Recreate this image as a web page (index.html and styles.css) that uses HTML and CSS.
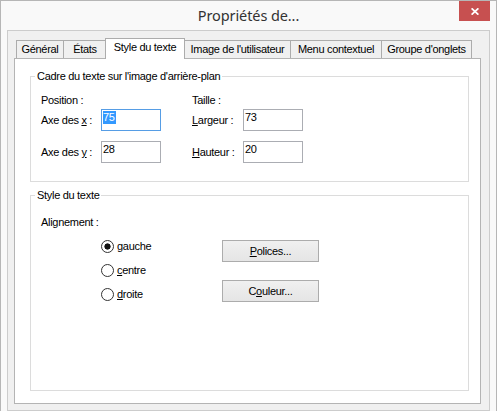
FILE: index.html
```html
<!DOCTYPE html>
<html lang="fr">
<head>
    <meta charset="UTF-8">
    <title>Propriétés de...</title>
    <link rel="stylesheet" href="styles.css">
</head>
<body>
    <div class="window">
        <div class="titlebar">
            <span class="title">Propriétés de...</span>
            <button class="close" aria-label="Fermer">
                <svg width="8" height="7" viewBox="0 0 8 7"><path d="M0.6 0.3 L7.4 6.7 M7.4 0.3 L0.6 6.7" stroke="#fff" stroke-width="1.7" fill="none"/></svg>
            </button>
        </div>

        <div class="frame">
            <div class="tabs">
                <div class="tab tab-general">Général</div>
                <div class="tab tab-states">États</div>
                <div class="tab tab-style active">Style du texte</div>
                <div class="tab tab-image">Image de l'utilisateur</div>
                <div class="tab tab-menu">Menu contextuel</div>
                <div class="tab tab-groups">Groupe d'onglets</div>
            </div>

            <div class="panel">
                <fieldset class="group group-frame">
                    <legend>Cadre du texte sur l'image d'arrière-plan</legend>
                    <div class="coords">
                        <span class="head">Position :</span>
                        <span></span>
                        <span class="head">Taille :</span>
                        <span></span>

                        <label class="row-label">Axe des <u>x</u> :</label>
                        <div class="field focused"><span class="sel">75</span></div>
                        <label class="row-label"><u>L</u>argeur :</label>
                        <div class="field">73</div>

                        <label class="row-label">Axe des <u>y</u> :</label>
                        <div class="field">28</div>
                        <label class="row-label"><u>H</u>auteur :</label>
                        <div class="field">20</div>
                    </div>
                </fieldset>

                <fieldset class="group group-style">
                    <legend>Style du texte</legend>
                    <div class="align">
                        <div class="head">Alignement :</div>
                        <div class="align-row">
                            <div class="radios">
                                <div class="radio"><span class="dot checked"></span><span><u>g</u>auche</span></div>
                                <div class="radio"><span class="dot"></span><span><u>c</u>entre</span></div>
                                <div class="radio"><span class="dot"></span><span><u>d</u>roite</span></div>
                            </div>
                            <div class="buttons">
                                <button class="btn"><u>P</u>olices...</button>
                                <button class="btn">C<u>o</u>uleur...</button>
                            </div>
                        </div>
                    </div>
                </fieldset>
            </div>
        </div>
    </div>
</body>
</html>
```

FILE: styles.css
```css
* {
    box-sizing: border-box;
}
body {
    margin: 0;
    font: 11px "Liberation Sans", Arial, sans-serif;
    letter-spacing: -0.3px;
    color: #000;
    background: #fff;
}

/* window chrome */
.window {
    width: 497px;
    height: 411px;
    display: flex;
    flex-direction: column;
    background: #f9f9f9;
    border: 1px solid #b6b6b6;
    border-bottom: 0;
}
.titlebar {
    height: 29px;
    display: flex;
    align-items: flex-start;
}
.title {
    flex: 1;
    padding-left: 37px;
    text-align: center;
    font: 14.5px "Noto Sans", sans-serif;
    letter-spacing: -0.1px;
    line-height: 29px;
    color: #333;
}
.close {
    width: 31px;
    height: 20px;
    margin-right: 6px;
    padding: 0;
    border: 0;
    background: #c75050;
    display: flex;
    align-items: center;
    justify-content: center;
}
.close svg {
    margin-top: 1px;
}
.frame {
    flex: 1;
    margin: 0 6px;
    padding: 7px 8px 6px 6px;
    display: flex;
    flex-direction: column;
    background: #f0f0f0;
    border: 1px solid #cccccc;
}

/* tab strip */
.tabs {
    display: flex;
    height: 21px;
    margin-bottom: -1px;
    padding-left: 2px;
    position: relative;
    z-index: 1;
}
.tab {
    flex-shrink: 0;
    height: 18px;
    margin-top: 2px;
    margin-left: -1px;
    border: 1px solid #acacac;
    border-bottom: 0;
    background: #f0f0f0;
    text-align: center;
    line-height: 17px;
    white-space: nowrap;
}
.tab:first-child {
    margin-left: 0;
}
.tab.active {
    height: 21px;
    margin-top: 0;
    margin-left: -2px;
    background: #fff;
    position: relative;
    z-index: 1;
}
.tab-general { width: 48px; }
.tab-states { width: 44px; }
.tab-style { width: 80px; }
.tab-image { width: 107px; }
.tab-menu { width: 92px; }
.tab-groups { width: 91px; }

.panel {
    flex: 1;
    display: flex;
    flex-direction: column;
    padding: 0 11px 12px 15px;
    background: #fff;
    border: 1px solid #b4b4b4;
}

/* group boxes */
.group {
    margin: 0;
    padding: 0;
    min-width: 0;
    border: 1px solid #dcdcdc;
}
.group legend {
    margin-left: 4px;
    padding: 0 2px;
    line-height: 13px;
}
.group-frame {
    margin-top: 11px;
}
.group-style {
    flex: 1;
    margin-top: 7px;
}
.head {
    line-height: 13px;
}

.coords {
    display: grid;
    grid-template-columns: 60px 91px 51px 60px;
    grid-template-rows: 15px 32px 22px;
    align-items: start;
    padding: 11px 0 18px 10px;
}
.row-label {
    line-height: 22px;
}
.field {
    width: 60px;
    height: 22px;
    padding: 1px 0 0 1px;
    line-height: 13px;
    background: #fff;
    border: 1px solid #abadb3;
}
.field.focused {
    border-color: #569de5;
}
.sel {
    display: inline-block;
    padding-right: 1px;
    color: #fff;
    background: #3399ff;
}

.align {
    padding: 14px 0 0 10px;
}
.align-row {
    display: flex;
    margin-top: 5px;
}
.radios {
    width: 121px;
    margin-left: 60px;
}
.radio {
    height: 24px;
    display: flex;
    align-items: center;
    gap: 3px;
}
.dot {
    width: 13px;
    height: 13px;
    border: 1px solid #333;
    border-radius: 50%;
    background: #fff;
}
.dot.checked {
    background: radial-gradient(circle, #111 0 2.8px, #fff 3.4px);
}
.buttons {
    display: flex;
    flex-direction: column;
    gap: 18px;
    padding-top: 6px;
}
.btn {
    width: 97px;
    height: 22px;
    padding: 0;
    font: inherit;
    letter-spacing: inherit;
    color: #000;
    background: linear-gradient(#f0f0f0, #e5e5e5);
    border: 1px solid #acacac;
}
```
